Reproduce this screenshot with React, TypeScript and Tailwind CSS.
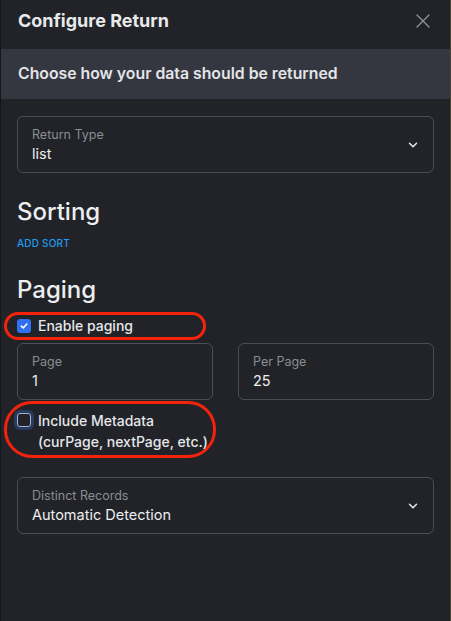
import React from "react";

function Chevron() {
  return (
    <svg width="14" height="14" viewBox="0 0 24 24" fill="none" stroke="#e5e7eb" strokeWidth="2.6" strokeLinecap="round" strokeLinejoin="round">
      <path d="M6 9l6 6 6-6" />
    </svg>
  );
}

function SelectField({ label, value }: { label: string; value: string }) {
  return (
    <div className="h-[57px] rounded-[6px] border border-[#4a4d55] pl-[14px] pr-[13px] flex items-center justify-between">
      <div className="flex flex-col pt-[1px]">
        <span className="text-[12.5px] leading-[18px] text-[#8a8d93]">{label}</span>
        <span className="text-[14.5px] leading-[20px] text-[#eceef0]">{value}</span>
      </div>
      <Chevron />
    </div>
  );
}

function InputField({ label, value }: { label: string; value: string }) {
  return (
    <div className="h-[57px] rounded-[6px] border border-[#4a4d55] pl-[14px] pt-[9px] flex flex-col">
      <span className="text-[12.5px] leading-[18px] text-[#8a8d93]">{label}</span>
      <span className="text-[14.5px] leading-[20px] text-[#eceef0]">{value}</span>
    </div>
  );
}

export default function App() {
  return (
    <div
      className="w-[451px] h-[621px] bg-[#212328] border-l border-[#15161a] border-r border-r-[#4a4535] text-[#e8e9eb] overflow-hidden"
      style={{ fontFamily: "Inter, 'Noto Sans', sans-serif" }}
    >
      <div className="h-[49px] flex items-start justify-between pl-[17px] pr-[19px] pt-[9px]">
        <span className="text-[18px] leading-[24px] font-bold">Configure Return</span>
        <svg width="16" height="16" viewBox="0 0 16 16" className="mt-[4px]" stroke="#8d9096" strokeWidth="1.4" strokeLinecap="round">
          <path d="M2 2l12 12M14 2L2 14" />
        </svg>
      </div>

      <div className="h-[50px] bg-[#34373f] flex items-center pl-[17px]">
        <span className="text-[15.8px] font-semibold text-[#e4e5e8]">Choose how your data should be returned</span>
      </div>

      <div className="px-[16px] pt-[17px] flex flex-col">
        <SelectField label="Return Type" value="list" />

        <h2 className="mt-[23px] text-[24px] leading-[32px] font-medium text-[#eceef0]">Sorting</h2>
        <button className="mt-[8px] self-start text-[10px] leading-[14px] font-medium tracking-[0.02em] text-[#1f9bf0]">
          ADD SORT
        </button>

        <h2 className="mt-[24px] text-[24px] leading-[32px] font-medium text-[#eceef0]">Paging</h2>

        <div className="mt-[6px] ml-[-13px] w-[202px] h-[28px] rounded-full border-[3px] border-[#f5230c] flex items-center pl-[10px] gap-[7px]">
          <span className="w-[14px] h-[14px] rounded-[3px] bg-[#2f6ff0] flex items-center justify-center">
            <svg width="10" height="10" viewBox="0 0 10 10" fill="none" stroke="white" strokeWidth="1.6" strokeLinecap="round" strokeLinejoin="round">
              <path d="M2.3 5.2l1.9 1.8L7.8 3" />
            </svg>
          </span>
          <span className="text-[14px] leading-[20px] font-medium text-[#e6e7ea]">Enable paging</span>
        </div>

        <div className="mt-[3px] grid grid-cols-2 gap-[25px]">
          <InputField label="Page" value="1" />
          <InputField label="Per Page" value="25" />
        </div>

        <div className="mt-[1px] ml-[-13px] w-[212px] h-[57px] rounded-[28px] border-[3px] border-[#f5230c] flex items-start pl-[10px] pt-[6px] gap-[7px]">
          <span className="mt-[3px] w-[14px] h-[14px] rounded-[3px] border-[1.5px] border-[#9fb3d8] shadow-[0_0_0_3px_#2a3c5e] shrink-0" />
          <span className="text-[14px] leading-[21px] font-medium text-[#e6e7ea]">
            Include Metadata
            <br />
            (curPage, nextPage, etc.)
          </span>
        </div>

        <div className="mt-[19px]">
          <SelectField label="Distinct Records" value="Automatic Detection" />
        </div>
      </div>
    </div>
  );
}
